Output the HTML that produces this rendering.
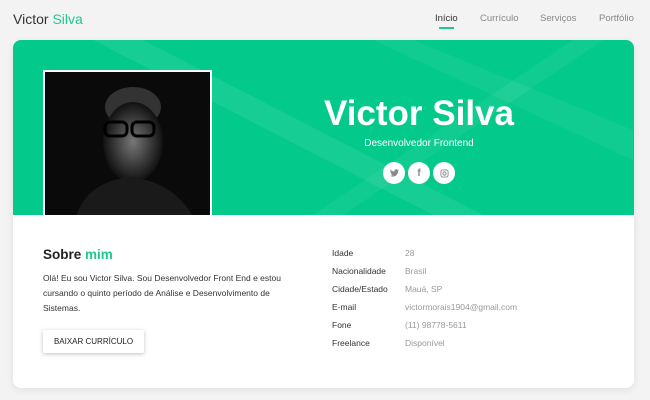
<!DOCTYPE html>
<html><head><meta charset="utf-8"><style>
*{margin:0;padding:0;box-sizing:border-box}
body{width:650px;height:400px;background:#f3f3f3;font-family:"Liberation Sans",sans-serif;position:relative;overflow:hidden}
.logo{position:absolute;left:13px;top:11px;font-size:14px;color:#333}
.logo span{color:#20c98b}
.nav{position:absolute;top:13px;font-size:9.5px;color:#888}
.nav.a{color:#333}
.ul{position:absolute;left:439px;top:27px;width:15px;height:2px;background:#20c98b}
.card{position:absolute;left:13px;top:40px;width:621px;height:348px;background:#fff;border-radius:8px;box-shadow:0 2px 8px rgba(0,0,0,.08);overflow:hidden}
.hero{position:absolute;left:0;top:0;width:621px;height:175px;background:#03c98a;overflow:hidden}
.photo{position:absolute;left:30px;top:30px;width:169px;height:148px;background:#0a0a0a;border:2px solid #fff;border-bottom:none;overflow:hidden}
.name{position:absolute;left:256px;top:54px;width:300px;text-align:center;color:#fff;font-weight:bold;font-size:35px}
.sub{position:absolute;left:256px;top:98px;width:300px;text-align:center;color:#fff;font-size:10px}
.ic{position:absolute;top:122px;width:22px;height:22px;border-radius:50%;background:#fff;display:flex;align-items:center;justify-content:center}
h2{position:absolute;left:30px;top:207px;font-size:13.5px;color:#222}
h2 span{color:#20c98b}
.p{position:absolute;left:30px;top:231px;width:265px;font-size:8.5px;line-height:15px;color:#333}
.btn{position:absolute;left:30px;top:290px;width:101px;height:23px;background:#fff;box-shadow:0 1px 4px rgba(0,0,0,.25);font-size:8px;color:#222;text-align:center;line-height:23px;border-radius:2px}
.l{position:absolute;left:319px;font-size:8.5px;color:#333}
.v{position:absolute;left:392px;font-size:8.5px;color:#999}
</style></head><body>
<div class="logo">Victor <span>Silva</span></div>
<div class="nav a" style="left:435px">Início</div><div class="ul"></div>
<div class="nav" style="left:480px">Currículo</div>
<div class="nav" style="left:540px">Serviços</div>
<div class="nav" style="left:599px">Portfólio</div>
<div class="card">
<div class="hero">
<svg width="621" height="175" style="position:absolute;left:0;top:0"><path d="M80 0 L420 175 L470 175 L130 0Z" fill="rgba(255,255,255,.08)"/><path d="M360 0 L620 120 L620 90 L400 0Z" fill="rgba(255,255,255,.06)"/><path d="M300 175 L560 0 L590 0 L330 175Z" fill="rgba(255,255,255,.06)"/></svg>
<div class="photo"><svg width="169" height="148"><defs><radialGradient id="g" cx=".5" cy=".5" r=".5"><stop offset="0" stop-color="#777"/><stop offset="1" stop-color="#111"/></radialGradient></defs><ellipse cx="88" cy="35" rx="28" ry="20" fill="#333"/><ellipse cx="88" cy="70" rx="30" ry="40" fill="url(#g)"/><path d="M30 148 Q40 110 85 105 Q130 110 150 148Z" fill="#1a1a1a"/><rect x="60" y="50" width="22" height="14" rx="5" fill="none" stroke="#000" stroke-width="3"/><rect x="87" y="50" width="22" height="14" rx="5" fill="none" stroke="#000" stroke-width="3"/></svg></div>
<div class="name">Victor Silva</div>
<div class="sub">Desenvolvedor Frontend</div>
<div class="ic" style="left:370px"><svg width="9" height="8" viewBox="0 0 24 20"><path d="M24 2.3a10 10 0 0 1-2.8.8A5 5 0 0 0 23.3.4a10 10 0 0 1-3.1 1.2A4.9 4.9 0 0 0 11.8 6 14 14 0 0 1 1.7.9a4.9 4.9 0 0 0 1.5 6.6A4.9 4.9 0 0 1 1 6.9a4.9 4.9 0 0 0 3.9 4.9 5 5 0 0 1-2.2.1 4.9 4.9 0 0 0 4.6 3.4A9.9 9.9 0 0 1 0 17.3 14 14 0 0 0 7.5 19.5c9 0 14-7.5 14-14v-.6A10 10 0 0 0 24 2.3z" fill="#888"/></svg></div>
<div class="ic" style="left:395px"><span style="font-size:10px;color:#888;font-weight:bold">f</span></div>
<div class="ic" style="left:420px"><svg width="9" height="9" viewBox="0 0 10 10"><rect x="1" y="1" width="8" height="8" rx="2.2" fill="none" stroke="#888" stroke-width="1"/><circle cx="5" cy="5" r="1.8" fill="none" stroke="#888" stroke-width="1"/></svg></div>
</div>
<h2>Sobre <span>mim</span></h2>
<div class="p">Olá! Eu sou Victor Silva. Sou Desenvolvedor Front End e estou cursando o quinto período de Análise e Desenvolvimento de Sistemas.</div>
<div class="btn">BAIXAR CURRÍCULO</div>
<div class="l" style="top:208px">Idade</div><div class="v" style="top:208px">28</div>
<div class="l" style="top:226px">Nacionalidade</div><div class="v" style="top:226px">Brasil</div>
<div class="l" style="top:244px">Cidade/Estado</div><div class="v" style="top:244px">Mauá, SP</div>
<div class="l" style="top:262px">E-mail</div><div class="v" style="top:262px">victormorais1904@gmail.com</div>
<div class="l" style="top:280px">Fone</div><div class="v" style="top:280px">(11) 98778-5611</div>
<div class="l" style="top:298px">Freelance</div><div class="v" style="top:298px">Disponível</div>
</div>
</body></html>
